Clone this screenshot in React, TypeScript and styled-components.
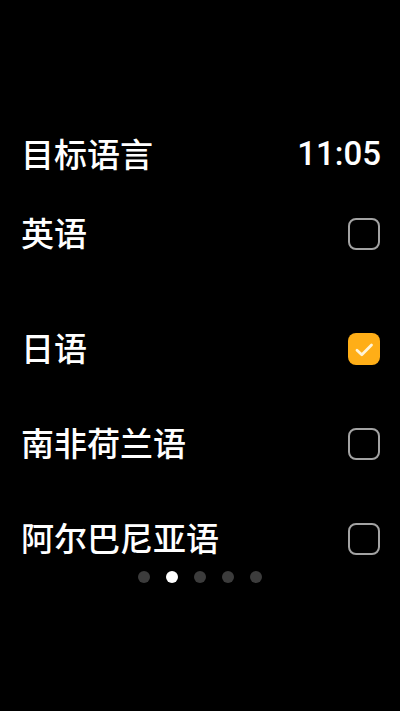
import React from "react"
import styled, { createGlobalStyle } from "styled-components"

const GlobalStyle = createGlobalStyle`
  html, body {
    margin: 0;
    padding: 0;
    background: #000;
  }
  body {
    font-family: "Noto Sans CJK SC", "Noto Sans", Roboto, sans-serif;
    color: #fff;
  }
`

const Screen = styled.div`
  width: 400px;
  height: 711px;
  background: #000;
  display: flex;
  flex-direction: column;
  padding-top: 123px;
  box-sizing: border-box;
  overflow: hidden;
`

const Header = styled.div`
  height: 60px;
  display: flex;
  align-items: center;
  justify-content: space-between;
  padding: 0 19px 0 21px;
`

const Title = styled.div`
  font-size: 33px;
  line-height: 1;
  font-weight: 500;
`

const Clock = styled.div`
  font-family: Roboto, "Noto Sans", sans-serif;
  font-size: 33px;
  font-weight: 500;
  line-height: 1;
`

const List = styled.div`
  display: flex;
  flex-direction: column;
  gap: 35px;
  margin-top: 21px;
`

const Row = styled.div<{ $first?: boolean }>`
  height: 60px;
  display: flex;
  align-items: center;
  justify-content: space-between;
  padding: 0 20px 0 21px;
  margin-bottom: ${p => (p.$first ? "20px" : "0")};
`

const Label = styled.div`
  font-size: 33px;
  line-height: 1;
  font-weight: 500;
  margin-top: -3px;
`

const Box = styled.div<{ $checked?: boolean }>`
  width: 32px;
  height: 32px;
  box-sizing: border-box;
  border-radius: 8px;
  border: ${p => (p.$checked ? "none" : "2.5px solid #a3a3a3")};
  background: ${p => (p.$checked ? "#ffae17" : "transparent")};
  display: flex;
  align-items: center;
  justify-content: center;
`

const Dots = styled.div`
  display: flex;
  justify-content: center;
  gap: 16px;
  margin-top: 2px;
`

const Dot = styled.div<{ $active?: boolean }>`
  width: 12px;
  height: 12px;
  border-radius: 50%;
  background: ${p => (p.$active ? "#fff" : "#3c3c3c")};
`

const languages = [
  { name: "英语", checked: false },
  { name: "日语", checked: true },
  { name: "南非荷兰语", checked: false },
  { name: "阿尔巴尼亚语", checked: false },
]

const Check = () => (
  <svg width="32" height="32" viewBox="0 0 32 32">
    <path d="M9 17.2 L13.8 21.8 L23.5 12" fill="none" stroke="#fff4d8" strokeWidth="2.8" strokeLinecap="round" strokeLinejoin="round" />
  </svg>
)

export default function App() {
  return (
    <>
      <GlobalStyle />
      <Screen>
        <Header>
          <Title>目标语言</Title>
          <Clock>11:05</Clock>
        </Header>
        <List>
          {languages.map((lang, i) => (
            <Row key={lang.name} $first={i === 0}>
              <Label>{lang.name}</Label>
              <Box $checked={lang.checked}>{lang.checked && <Check />}</Box>
            </Row>
          ))}
        </List>
        <Dots>
          {[0, 1, 2, 3, 4].map(i => <Dot key={i} $active={i === 1} />)}
        </Dots>
      </Screen>
    </>
  )
}
